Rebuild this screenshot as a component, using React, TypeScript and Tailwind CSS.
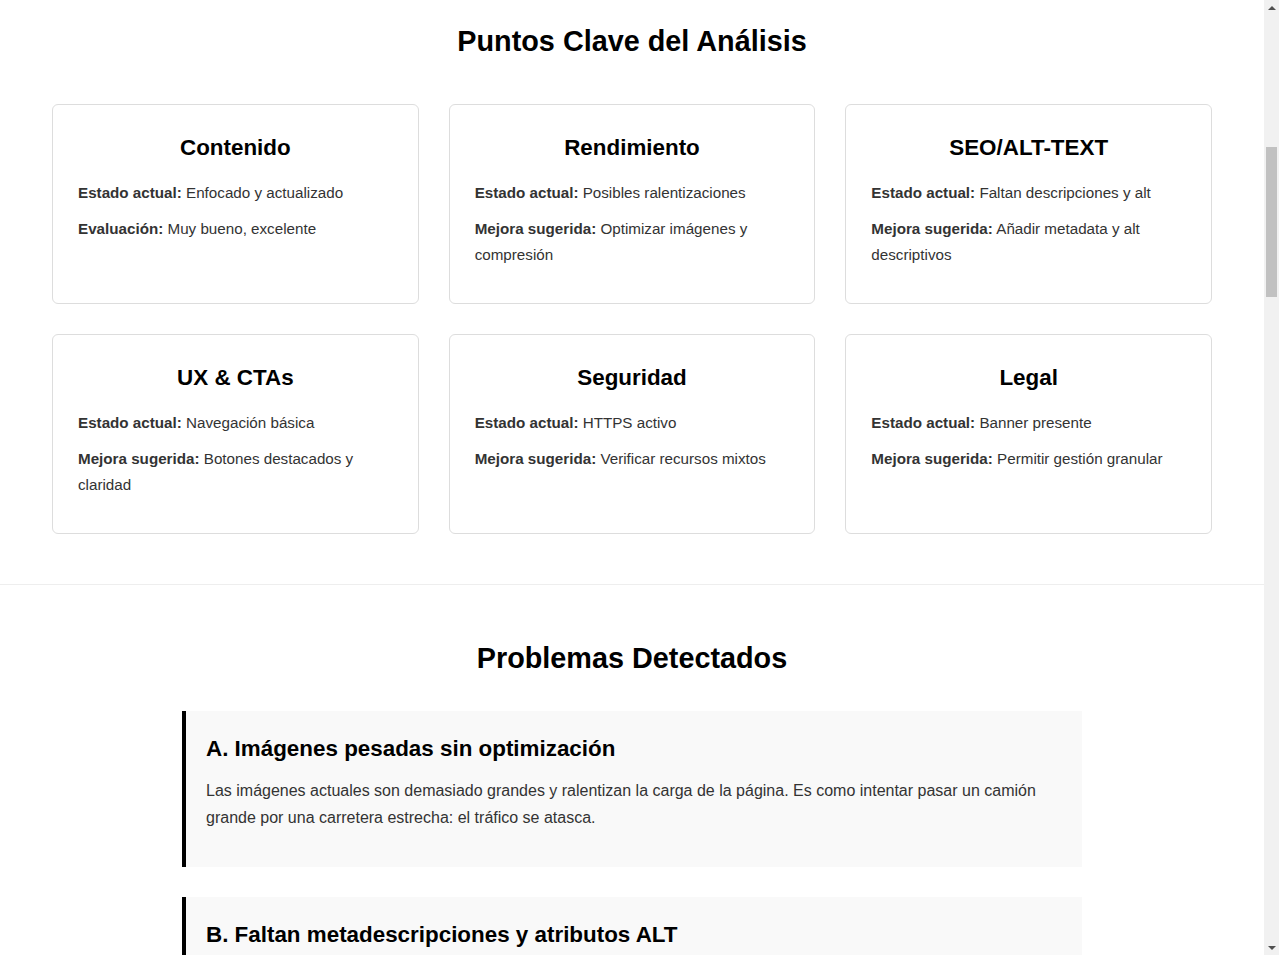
import React from "react";

const cards = [
  { title: "Contenido", a: ["Estado actual:", "Enfocado y actualizado"], b: ["Evaluación:", "Muy bueno, excelente"] },
  { title: "Rendimiento", a: ["Estado actual:", "Posibles ralentizaciones"], b: ["Mejora sugerida:", "Optimizar imágenes y compresión"] },
  { title: "SEO/ALT-TEXT", a: ["Estado actual:", "Faltan descripciones y alt"], b: ["Mejora sugerida:", "Añadir metadata y alt descriptivos"] },
  { title: "UX & CTAs", a: ["Estado actual:", "Navegación básica"], b: ["Mejora sugerida:", "Botones destacados y claridad"] },
  { title: "Seguridad", a: ["Estado actual:", "HTTPS activo"], b: ["Mejora sugerida:", "Verificar recursos mixtos"] },
  { title: "Legal", a: ["Estado actual:", "Banner presente"], b: ["Mejora sugerida:", "Permitir gestión granular"] },
];

const problems = [
  {
    title: "A. Imágenes pesadas sin optimización",
    text: "Las imágenes actuales son demasiado grandes y ralentizan la carga de la página. Es como intentar pasar un camión grande por una carretera estrecha: el tráfico se atasca.",
  },
  {
    title: "B. Faltan metadescripciones y atributos ALT",
    text: "Sin metadescripciones ni textos alternativos, los buscadores no entienden bien el contenido y las personas con lectores de pantalla pierden información importante.",
  },
];

function FakeScrollbar() {
  return (
    <div className="w-[15px] h-[955px] shrink-0 bg-[#f1f1f1] flex flex-col items-center">
      <div className="h-[15px] w-full flex items-center justify-center">
        <div className="w-0 h-0 border-l-[4px] border-r-[4px] border-b-[4px] border-l-transparent border-r-transparent border-b-[#505050]" />
      </div>
      <div className="mt-[132px] w-[11px] h-[150px] bg-[#c1c1c1]" />
      <div className="flex-1" />
      <div className="h-[15px] w-full flex items-center justify-center">
        <div className="w-0 h-0 border-l-[4px] border-r-[4px] border-t-[4px] border-l-transparent border-r-transparent border-t-[#505050]" />
      </div>
    </div>
  );
}

export default function App() {
  return (
    <div className="flex items-start h-[955px] overflow-hidden bg-white text-[#333] font-['Liberation_Sans',Arial,sans-serif]">
      <main className="w-[1264px] shrink-0">
        <section className="px-[52px] pt-[24px] pb-[50px] border-b border-[#eee]">
          <h2 className="text-center text-[28.8px] font-bold text-black leading-[1.2] mb-[45px]">
            Puntos Clave del Análisis
          </h2>
          <div className="grid grid-cols-3 gap-[30px] max-w-[1160px] mx-auto">
            {cards.map((c) => (
              <div key={c.title} className="border border-[#ddd] rounded-[6px] bg-white pt-[26px] px-[25px] pb-[25px]">
                <h3 className="text-center text-[22.4px] font-bold text-black leading-[34px] mb-[15px]">
                  {c.title}
                </h3>
                <p className="text-[15.2px] leading-[26px] mb-[10px]">
                  <strong className="font-bold">{c.a[0]}</strong> {c.a[1]}
                </p>
                <p className="text-[15.2px] leading-[26px] mb-[10px]">
                  <strong className="font-bold">{c.b[0]}</strong> {c.b[1]}
                </p>
              </div>
            ))}
          </div>
        </section>

        <section className="px-[52px] pt-[56px] pb-[50px]">
          <h2 className="text-center text-[28.8px] font-bold text-black leading-[1.2] mb-[36px]">
            Problemas Detectados
          </h2>
          <div className="max-w-[900px] mx-auto flex flex-col gap-[30px]">
            {problems.map((p) => (
              <div key={p.title} className="bg-[#f9f9f9] border-l-4 border-black p-[20px]">
                <h3 className="text-[22.4px] font-bold text-black leading-[34px] mt-[1px] mb-[11px]">{p.title}</h3>
                <p className="text-[16px] leading-[27.2px] mb-[15px]">{p.text}</p>
              </div>
            ))}
          </div>
        </section>
      </main>
      <FakeScrollbar />
    </div>
  );
}
